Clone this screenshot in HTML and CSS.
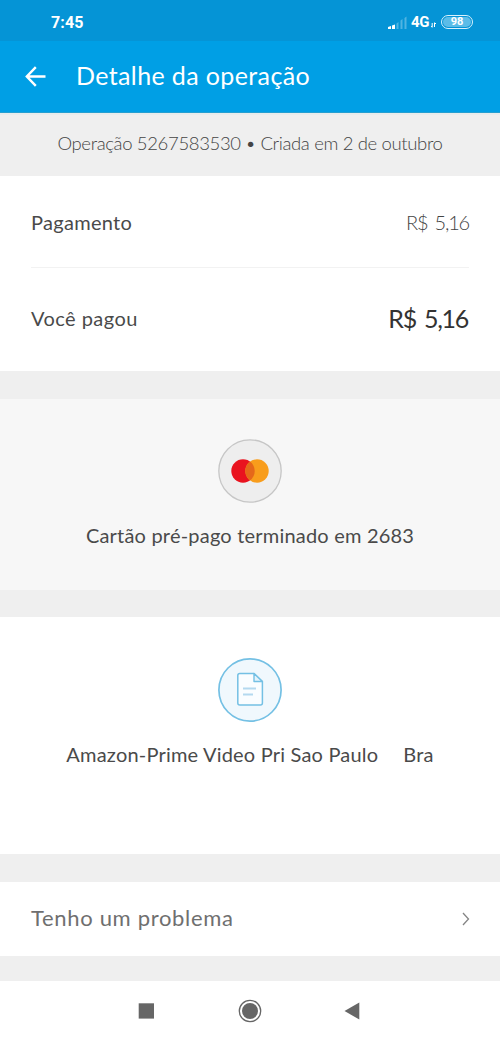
FILE: index.html
```html
<!DOCTYPE html>
<html lang="pt-BR">
<head>
<meta charset="utf-8">
<title>Detalhe da operação</title>
<link rel="stylesheet" href="styles.css">
</head>
<body>
<div class="status">
  <span class="time">7:45</span>
  <div class="indicators">
    <svg class="signal" width="19" height="13" viewBox="0 0 19 13"><path fill="#fff" d="M0 13v-2l3-1v3zM4 13v-3.500l3-1v4.500z"/><path fill="#fff" opacity=".3" d="M8.500 13V7.500l2-1.500v7zM12.500 13V4.500l2-1.500v10zM16.500 13V2l2-1.500v12.500z"/></svg>
    <span class="network">4G</span>
    <svg class="data" width="5" height="6" viewBox="0 0 5 6"><path d="M1.200 1v4M0 4l1.200 1.500M3.500 5V1M5 2L3.500.5" stroke="#fff" fill="none"/></svg>
    <span class="battery"><span class="level">98</span></span>
  </div>
</div>
<header class="appbar">
  <svg class="back" width="21" height="21" viewBox="0 0 21 21"><path d="M20.500 10.500H2M10.800 1.200L1.800 10.500l9 9.300" fill="none" stroke="#fff" stroke-width="2.400"/></svg>
  <h1 class="title">Detalhe da operação</h1>
</header>
<div class="summary"><span class="summary-text">Operação 5267583530 • Criada em 2 de outubro</span></div>
<main>
  <section class="amounts">
    <div class="row payment"><span class="label pay-label">Pagamento</span><span class="value">R$ 5,16</span></div>
    <div class="row paid"><span class="label paid-label">Você pagou</span><span class="total">R$ 5,16</span></div>
  </section>
  <section class="method">
    <svg width="64" height="64" viewBox="0 0 64 64"><circle cx="32" cy="32" r="31.200" fill="#eee" stroke="#c6c6c6" stroke-width="1.300"/><circle cx="25" cy="32" r="11.700" fill="#e9131f"/><circle cx="39" cy="32" r="11.700" fill="#f89d1c"/><path d="M32 22.600a11.700 11.700 0 0 1 0 18.800a11.700 11.700 0 0 1 0-18.800z" fill="#e5681a"/></svg>
    <span class="caption card-caption">Cartão pré-pago terminado em 2683</span>
  </section>
  <section class="merchant">
    <svg width="64" height="64" viewBox="0 0 64 64"><circle cx="32" cy="32" r="31.100" fill="#f0f8fd" stroke="#74c0e4" stroke-width="1.700"/><path d="M36 15.500H21.800q-2 0-2 2v27.600q0 2 2 2h20.600q2 0 2-2V23.500z" fill="#fafdff" stroke="#74c0e4" stroke-width="1.500" stroke-linejoin="round"/><path d="M36 15.500v8h8.400z" fill="#e4f3fb" stroke="#74c0e4" stroke-width="1.400" stroke-linejoin="round"/><path d="M25 30.500h13M25 36.500h10" stroke="#b4d9ef" stroke-width="2"/></svg>
    <span class="caption shop-caption"><span>Amazon-Prime Video Pri Sao Paulo</span><span>Bra</span></span>
  </section>
  <section class="problem">
    <span class="problem-text">Tenho um problema</span>
    <svg width="8" height="14" viewBox="0 0 8 14"><path d="M1 1l5.500 6L1 13" fill="none" stroke="#858585" stroke-width="1.300"/></svg>
  </section>
</main>
<nav class="navbar">
  <svg width="24" height="24" viewBox="0 0 24 24"><path d="M4.700 4.300h15.300v15.300H4.700z" fill="#666"/></svg>
  <svg width="24" height="24" viewBox="0 0 24 24"><circle cx="12" cy="12" r="10.700" fill="none" stroke="#666" stroke-width="1.300"/><circle cx="12" cy="12" r="8" fill="#666"/></svg>
  <svg width="24" height="24" viewBox="0 0 24 24"><path d="M2.500 12L17.300 3.500v17z" fill="#666"/></svg>
</nav>
</body>
</html>
```
FILE: styles.css
```css
* { box-sizing: border-box; }
body {
  margin: 0;
  width: 500px;
  height: 1041px;
  display: flex;
  flex-direction: column;
  background: #efefef;
  font-family: Lato, "Open Sans", sans-serif;
  color: #4a4a4a;
  overflow: hidden;
  white-space: nowrap;
}
svg { display: block; flex: none; }
.status {
  height: 41px;
  padding: 3px 27px 0 51px;
  display: flex;
  align-items: center;
  justify-content: space-between;
  background: #0594d6;
  color: #fff;
  font-family: Roboto, sans-serif;
}
.time { font-size: 16px; font-weight: 700; letter-spacing: .1px; }
.indicators { display: flex; align-items: center; }
.signal { margin-right: 4px; }
.network { font-size: 15px; font-weight: 700; letter-spacing: -.4px; }
.data { margin: 5px 5px 0 2px; }
.battery {
  width: 32px;
  height: 14px;
  padding: 1px;
  border: 1.500px solid #d9f1fc;
  border-radius: 7px;
  display: flex;
}
.level {
  flex: 1;
  border-radius: 5px;
  background: #5bbce8;
  font-size: 11px;
  font-weight: 700;
  line-height: 10px;
  text-align: center;
}
.appbar {
  height: 72px;
  padding: 0 25px 1px;
  display: flex;
  align-items: center;
  gap: 30px;
  background: #009fe5;
  border-bottom: 1px solid #269fd0;
  color: #fff;
}
.title {
  margin: 0;
  padding-bottom: 2px;
  font-size: 25px;
  font-weight: 400;
  line-height: 30px;
  letter-spacing: .38px;
}
.summary {
  height: 63px;
  padding-bottom: 5px;
  display: flex;
  align-items: center;
  justify-content: center;
  border-top: 2px solid #e8ecec;
  color: #444;
}
.summary-text { font-size: 18.500px; font-weight: 300; letter-spacing: -.35px; }
.amounts { height: 195px; padding: 0 31px; background: #fff; }
.row { display: flex; align-items: center; justify-content: space-between; }
.payment { height: 92px; border-bottom: 1px solid #f2f2f2; }
.paid { height: 103px; padding-bottom: 4px; }
.label, .caption { font-size: 20px; }
.pay-label { letter-spacing: .3px; }
.paid-label { letter-spacing: .45px; }
.value {
  font-size: 20px;
  font-weight: 300;
  color: #444;
  letter-spacing: -1.200px;
  word-spacing: 3px;
}
.total {
  font-size: 25px;
  color: #333;
  letter-spacing: -1.300px;
  word-spacing: 3px;
  margin-right: 1px;
}
.method, .merchant {
  display: flex;
  flex-direction: column;
  align-items: center;
  padding-top: 41px;
  gap: 20px;
}
.method { height: 191px; margin-top: 28px; padding-top: 40px; background: #f7f7f7; }
.merchant { height: 237px; margin-top: 27px; background: #fff; }
.caption { line-height: 24px; letter-spacing: .2px; }
.shop-caption { display: flex; gap: 25px; }
.problem {
  height: 74px;
  margin-top: 28px;
  padding: 0 30px 0 31px;
  display: flex;
  align-items: center;
  justify-content: space-between;
  background: #fff;
  color: #6f6f6f;
}
.problem-text { font-size: 22px; letter-spacing: .68px; padding-bottom: 4px; }
.navbar {
  height: 60px;
  margin-top: 25px;
  padding: 18px 0 0 134px;
  display: flex;
  gap: 80px;
  background: #fff;
}
```
